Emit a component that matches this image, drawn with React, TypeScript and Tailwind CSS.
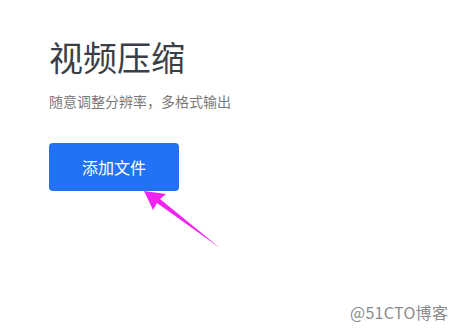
export default function App() {
  return (
    <div
      className="relative w-[459px] h-[332px] bg-white overflow-hidden"
      style={{ fontFamily: '"Noto Sans CJK SC", "Noto Sans", sans-serif' }}
    >
      <div className="pl-[49px] pt-[33px] flex flex-col items-start">
        <h1 className="text-[34px] leading-[48px] text-[#3a3f47] font-normal">视频压缩</h1>
        <p className="mt-[10px] text-[14px] leading-[20px] text-[#7a7a7a]">随意调整分辨率，多格式输出</p>
        <button className="mt-[32px] w-[130px] h-[48px] rounded-[4px] bg-[#2371f4] text-white text-[16px]">
          添加文件
        </button>
      </div>

      {/* annotation arrow */}
      <svg className="absolute left-0 top-0" width="459" height="332" viewBox="0 0 459 332">
        <polygon points="144,191 166,194 160,199 220,248 157,203 153,210" fill="#f023f0" />
      </svg>

      <div className="absolute left-[350px] top-[301px] text-[16px] leading-[22px] tracking-[0.3px] text-[#8a8a8a]">@51CTO博客</div>
    </div>
  );
}
